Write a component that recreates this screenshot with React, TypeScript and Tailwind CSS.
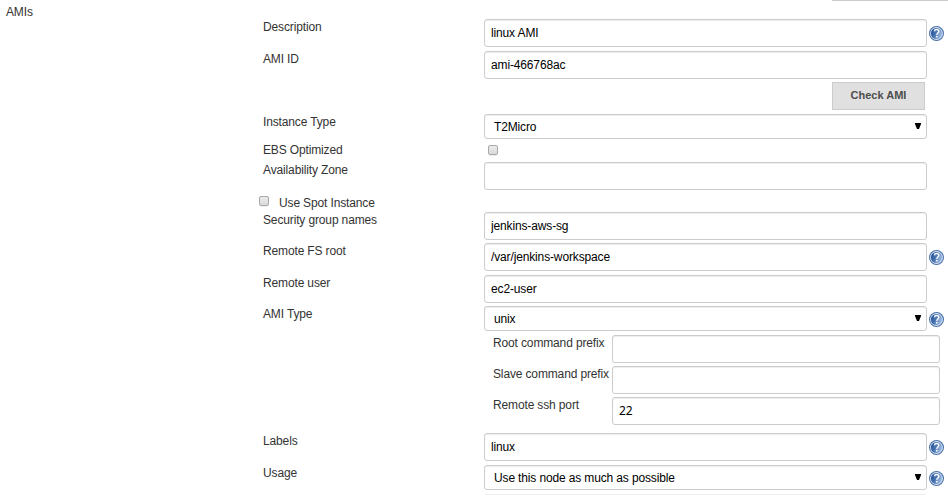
import type { ReactNode } from 'react';

const box =
  'w-full rounded-[3px] border border-[#ccc] bg-white text-black shadow-[inset_0_1px_1px_rgba(0,0,0,0.075)] outline-none';

function Help() {
  return (
    <svg viewBox="0 0 15 15" className="size-[15px] shrink-0" role="img">
      <defs>
        <linearGradient id="helpFill" x1="0" y1="0" x2="1" y2="0.4">
          <stop offset="0" stopColor="#1c4a8e" />
          <stop offset="0.45" stopColor="#3f6cab" />
          <stop offset="1" stopColor="#9db8de" />
        </linearGradient>
      </defs>
      <circle cx="7.5" cy="7.5" r="7.5" fill="#4670a9" />
      <circle cx="7.5" cy="7.5" r="6.4" fill="#dce6f3" />
      <circle cx="7.5" cy="7.5" r="5.6" fill="url(#helpFill)" />
      <path
        d="M5.4 5.3C5.6 4 6.5 3.5 7.6 3.5C9 3.5 9.8 4.3 9.8 5.4C9.8 7 7.9 7 7.7 8.9"
        fill="none"
        stroke="#fff"
        strokeWidth="1.4"
      />
      <rect x="6.9" y="9.9" width="1.6" height="1.6" fill="#fff" />
    </svg>
  );
}

function TextField({ value = '', className = '' }: { value?: string; className?: string }) {
  return <input readOnly value={value} className={`${box} block h-7 px-1.5 ${className}`} />;
}

function SelectField({ value }: { value: string }) {
  return (
    <div className={`${box} flex h-[25px] items-center justify-between pr-[5px] pl-[9px]`}>
      <span>{value}</span>
      <svg viewBox="0 0 6 6" className="mb-px h-1.5 w-1.5">
        <path d="M0 0H6V1L4 6H2L0 1Z" fill="#000" />
      </svg>
    </div>
  );
}

function Check() {
  return (
    <span className="block size-2.5 shrink-0 rounded-[2px] border border-[#a9a9a9] bg-linear-to-b from-[#ececec] to-[#dadada] shadow-[0_1px_0_rgba(0,0,0,0.06)]" />
  );
}

function Row({
  label,
  height,
  help,
  children,
}: {
  label: string;
  height: string;
  help?: string;
  children: ReactNode;
}) {
  return (
    <div className={`flex items-start ${height}`}>
      <div className="w-[221px] shrink-0 leading-4">{label}</div>
      <div className="w-[443px] shrink-0">{children}</div>
      {help && (
        <div className={`ml-0.5 ${help}`}>
          <Help />
        </div>
      )}
    </div>
  );
}

function SubRow({ label, value, height }: { label: string; value?: string; height: string }) {
  return (
    <div className={`flex items-start ${height}`}>
      <div className="w-[119px] shrink-0 leading-4 whitespace-nowrap">{label}</div>
      <div className="w-[328px] shrink-0">
        <TextField
          value={value}
          className={value ? "pb-0.5 font-['Noto_Sans',sans-serif] tracking-[-0.1px]" : ''}
        />
      </div>
    </div>
  );
}

export default function App() {
  return (
    <div className="flex h-[498px] w-[948px] overflow-hidden bg-white font-['Liberation_Sans',Arial,sans-serif] text-[12px] tracking-[-0.14px] text-[#333]">
      <div className="w-[263px] shrink-0 pt-1 pl-1.5 leading-4">AMIs</div>
      <div className="flex w-[685px] shrink-0 flex-col">
        <div className="h-[19px] shrink-0">
          <div className="ml-auto h-px w-[116px] bg-[#ccc]" />
        </div>
        <Row label="Description" height="h-8" help="pt-[7px]">
          <TextField value="linux AMI" />
        </Row>
        <Row label="AMI ID" height="h-[31px]">
          <TextField value="ami-466768ac" />
        </Row>
        <div className="flex h-8 items-start pl-[569px]">
          <button className="h-7 w-[93px] border border-[#ccc] bg-[#e0e0e0] pb-0.5 text-[11px] font-bold tracking-normal text-[#4d4d4d]">
            Check AMI
          </button>
        </div>
        <Row label="Instance Type" height="h-7">
          <SelectField value="T2Micro" />
        </Row>
        <Row label="EBS Optimized" height="h-5">
          <div className="pt-[3px] pl-1">
            <Check />
          </div>
        </Row>
        <Row label="Availability Zone" height="h-[33px]">
          <TextField />
        </Row>
        <div className="-ml-1 flex h-[17px] items-start gap-2.5">
          <div className="pt-px">
            <Check />
          </div>
          <span className="leading-4">Use Spot Instance</span>
        </div>
        <Row label="Security group names" height="h-[31px]">
          <TextField value="jenkins-aws-sg" />
        </Row>
        <Row label="Remote FS root" height="h-8" help="pt-[7px]">
          <TextField value="/var/jenkins-workspace" />
        </Row>
        <Row label="Remote user" height="h-[31px]">
          <TextField value="ec2-user" />
        </Row>
        <Row label="AMI Type" height="h-[29px]" help="pt-1.5">
          <SelectField value="unix" />
        </Row>
        <div className="pl-[230px]">
          <SubRow label="Root command prefix" height="h-[31px]" />
          <SubRow label="Slave command prefix" height="h-[31px]" />
          <SubRow label="Remote ssh port" value="22" height="h-9" />
        </div>
        <Row label="Labels" height="h-8" help="pt-[7px]">
          <TextField value="linux" />
        </Row>
        <Row label="Usage" height="h-[29px]" help="pt-1.5">
          <SelectField value="Use this node as much as possible" />
        </Row>
        <div className="ml-[222px] h-px w-[441px] shrink-0 bg-[#eee]" />
      </div>
    </div>
  );
}
